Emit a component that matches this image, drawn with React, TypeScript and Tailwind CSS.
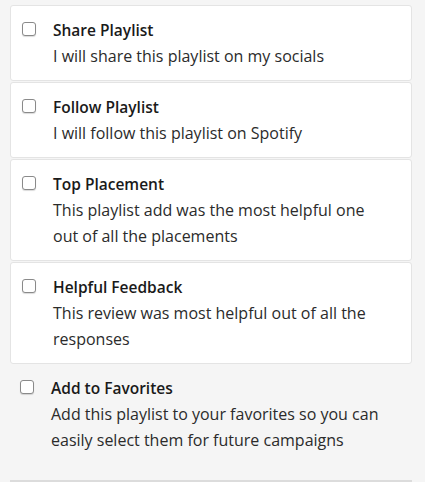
const items = [
  { title: "Share Playlist", desc: "I will share this playlist on my socials" },
  { title: "Follow Playlist", desc: "I will follow this playlist on Spotify" },
  {
    title: "Top Placement",
    desc: "This playlist add was the most helpful one out of all the placements",
  },
  {
    title: "Helpful Feedback",
    desc: "This review was most helpful out of all the responses",
  },
];

function Box() {
  return (
    <span className="mt-[5px] block h-[14px] w-[14px] shrink-0 rounded-[3px] border border-[#8a8a8a] bg-white shadow-[0_1px_1px_rgba(0,0,0,0.15)]" />
  );
}

function Option({ title, desc }: { title: string; desc: string }) {
  return (
    <div className="flex items-start gap-[17px]">
      <Box />
      <div className="min-w-0 flex-1">
        <div className="text-[15.5px] font-semibold leading-[26px] text-[#1a1a1a]">{title}</div>
        <div className="text-[16px] leading-[26px] text-[#2b2b2b]">{desc}</div>
      </div>
    </div>
  );
}

export default function App() {
  return (
    <div
      className="h-[482px] overflow-hidden bg-[#f5f5f5] px-[10px] pt-[5px]"
      style={{ fontFamily: "'Open Sans', Lato, sans-serif" }}
    >
      <div className="flex w-[402px] flex-col gap-[1px]">
        {items.map((it) => (
          <div
            key={it.title}
            className="rounded-[3px] border border-[#e4e4e4] bg-white py-[11px] pl-[11px] pr-[20px]"
          >
            <Option title={it.title} desc={it.desc} />
          </div>
        ))}
      </div>
      <div className="w-[402px] border-b-[2px] border-[#dcdcdc] pb-[27px] pl-[10px] pr-[14px] pt-[11px]">
        <Option
          title="Add to Favorites"
          desc="Add this playlist to your favorites so you can easily select them for future campaigns"
        />
      </div>
    </div>
  );
}
